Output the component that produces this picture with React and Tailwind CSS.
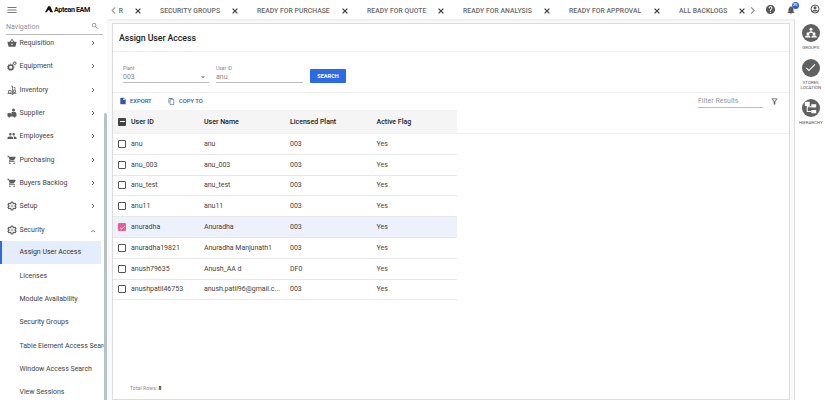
import React from "react";
import {
  MdMenu, MdSearch, MdShoppingBasket, MdPeople, MdShoppingCart,
  MdHelp, MdNotifications,
  MdInsertDriveFile, MdContentCopy, MdOutlineFilterAlt, MdArrowDropDown, MdCheck,
} from "react-icons/md";

const GearsIcon = ({ className }) => (
  <svg viewBox="0 0 20 20" className={className} fill="none" stroke="currentColor">
    <circle cx="7.5" cy="12.5" r="4.7" strokeWidth="3" />
    <circle cx="7.5" cy="12.5" r="6.7" strokeWidth="1.4" strokeDasharray="2.2 2" />
    <circle cx="15.5" cy="4.5" r="2.4" strokeWidth="2" />
    <circle cx="15.5" cy="4.5" r="3.8" strokeWidth="1" strokeDasharray="1.4 1.6" />
  </svg>
);

const InventoryIcon = ({ className }) => (
  <svg viewBox="0 0 20 20" className={className} fill="none" stroke="currentColor" strokeWidth="1.5">
    <path d="M8 2h3v15h8M1 17h8M3 11h5v5H3zM13 10h4v5h-4zM13 5h3v4" />
    <circle cx="11" cy="17.5" r="1.6" />
  </svg>
);

const SupplierIcon = ({ className }) => (
  <svg viewBox="0 0 20 20" className={className} fill="currentColor">
    <circle cx="13" cy="4" r="3" />
    <path d="M9 8h8l2 4v5H9zM1 10h6l2 3v4H1z" />
    <circle cx="4.5" cy="17" r="2.2" />
    <circle cx="15" cy="17" r="2.2" />
  </svg>
);

const GearIcon = ({ className }) => (
  <svg viewBox="0 0 20 20" className={className} fill="none" stroke="currentColor" strokeWidth="2.4" strokeLinejoin="round">
    <path d="M8.3 2h3.4l.5 2.4 1.8 1 2.3-.8 1.7 3L16.200 9.200v1.600l1.800 1.600-1.700 3-2.300-.8-1.800 1-.5 2.400H8.300l-.5-2.400-1.800-1-2.300.8-1.700-3 1.800-1.600V9.200L2 7.600l1.700-3 2.300.8 1.800-1z" />
    <circle cx="10" cy="10" r="2" strokeWidth="1" />
  </svg>
);

const CloseIcon = () => (
  <svg viewBox="0 0 8 8" className="size-[8px] shrink-0" fill="none" stroke="#444" strokeWidth="1.3">
    <path d="M1.6 1.6l4.8 4.8M6.4 1.6L1.6 6.4" />
  </svg>
);

const Chevron = ({ d, className }) => (
  <svg viewBox="0 0 8 8" className={className} fill="none" stroke="currentColor" strokeWidth="1"><path d={d} /></svg>
);

const menu = [
  [MdShoppingBasket, "Requisition"],
  [GearsIcon, "Equipment"],
  [InventoryIcon, "Inventory"],
  [SupplierIcon, "Supplier"],
  [MdPeople, "Employees"],
  [MdShoppingCart, "Purchasing"],
  [MdShoppingCart, "Buyers Backlog"],
  [GearIcon, "Setup"],
  [GearIcon, "Security"],
];

const subMenu = [
  "Assign User Access", "Licenses", "Module Availability", "Security Groups",
  "Table Element Access Search", "Window Access Search", "View Sessions",
];

const tabs = [
  ["SECURITY GROUPS", "w-[97px]"],
  ["READY FOR PURCHASE", "w-[110px]"],
  ["READY FOR QUOTE", "w-[96px]"],
  ["READY FOR ANALYSIS", "w-[106px]"],
  ["READY FOR APPROVAL", "w-[110px]"],
  ["ALL BACKLOGS", "w-[85px]"],
];

const rows = [
  ["anu", "anu", "003"],
  ["anu_003", "anu_003", "003"],
  ["anu_test", "anu_test", "003"],
  ["anu11", "anu11", "003"],
  ["anuradha", "Anuradha", "003"],
  ["anuradha19821", "Anuradha Manjunath1", "003"],
  ["anush79635", "Anush_AA d", "DF0"],
  ["anushpatil46753", "anush.patil96@gmail.c...", "003"],
];

const columns = "grid grid-cols-[18px_73px_86px_86px_81px] items-center";

function Sidebar() {
  return (
    <aside className="flex w-[107px] shrink-0 flex-col overflow-hidden bg-white">
      <div className="flex h-[19px] shrink-0 items-center pl-[6px]">
        <MdMenu className="size-[12px] text-[#777]" />
        <svg viewBox="0 0 10 8" className="ml-[27px] h-[7px] w-[8px]" fill="#111">
          <path d="M4 0h2.5L10 7.5H6.6L5 4.2 3 6 2.8 7.5H0z" />
        </svg>
        <span className="ml-[1px] text-[7.2px] font-bold tracking-[-0.4px] text-[#111]">Aptean EAM</span>
      </div>
      <div className="ml-[6px] flex h-[16px] w-[97px] shrink-0 items-center justify-between border-b border-[#bbb] pr-[4px]">
        <span className="pt-[2px] text-[7px] text-[#8795a3]">Navigation</span>
        <MdSearch className="-mt-[1px] size-[8px] text-[#777]" />
      </div>
      <div className="flex min-h-0 flex-1">
        <nav className="-mt-[4px] w-[104px] shrink-0 overflow-hidden text-[7px] text-[#444]">
          {menu.map(([Icon, label]) => (
            <div key={label} className="flex h-[23.3px] items-center pl-[7px] pr-[7px] pt-[1px]">
              <Icon className="size-[10px] text-[#5c5c5c]" />
              <span className="ml-[2.5px] flex-1 pt-[1px]">{label}</span>
              {label === "Security" ? (
                <Chevron d="M2 6l2-1.5L6 6" className="size-[8px] text-[#888]" />
              ) : (
                <Chevron d="M3 2l2 2-2 2" className="size-[8px] text-[#666]" />
              )}
            </div>
          ))}
          {subMenu.map((label, i) => (
            <div
              key={label}
              className={`flex h-[23.35px] items-center whitespace-nowrap pt-[1px] tracking-[-0.02px] ${
                i === 0 ? "mr-[3px] border-l-2 border-[#2f6be0] bg-[#e4edfb] pl-[17.5px] text-[#333]" : "pl-[19.5px]"
              }`}
            >
              {label}
            </div>
          ))}
        </nav>
        <div className="mt-[78px] w-[3px] shrink-0 rounded-t bg-[#b9c2c6]" />
      </div>
    </aside>
  );
}

function TopBar() {
  return (
    <header className="flex h-[19px] shrink-0 items-center bg-white text-[6.8px] font-medium tracking-[0.04px] text-[#686868]">
      <Chevron d="M5.5 1.2L2.8 4l2.7 2.8" className="ml-[1.5px] mt-[2px] size-[9px] shrink-0 text-[#999]" />
      <span className="ml-[0.5px] mt-[3px] flex w-[5px] justify-end overflow-hidden">R</span>
      <div className="ml-[11px] mt-[3px]"><CloseIcon /></div>
      <div className="ml-[18px] mt-[3px] flex">
        {tabs.map(([label, width]) => (
          <div key={label} className={`${width} flex shrink-0 items-center justify-between whitespace-nowrap pr-[18px]`}>
            {label}
            <CloseIcon />
          </div>
        ))}
      </div>
      <Chevron d="M2.8 1.2L5.500 4 2.800 6.800" className="-ml-[16px] mt-[2px] size-[9px] shrink-0 text-[#888]" />
      <MdHelp className="-mt-[1px] ml-[8px] size-[11px] shrink-0 text-[#5a5a5a]" />
      <div className="relative ml-[10px] shrink-0">
        <MdNotifications className="size-[10px] text-[#5a5a5a]" />
        <span className="absolute -top-[3px] left-[5.5px] flex size-[7px] items-center justify-center rounded-full bg-[#2962d0] text-[4px] tracking-[0px] text-white">20</span>
      </div>
      <svg viewBox="0 0 20 20" className="-mt-[2px] ml-[14px] size-[10px] shrink-0" fill="none" stroke="#5a5a5a" strokeWidth="2">
        <circle cx="10" cy="10" r="8" />
        <circle cx="10" cy="7.5" r="3" fill="#5a5a5a" stroke="none" />
        <path d="M4 15c2-3.5 10-3.5 12 0" fill="#5a5a5a" />
      </svg>
    </header>
  );
}

function Checkbox({ state }) {
  if (state === "checked")
    return <span className="ml-[5px] flex size-[8px] items-center justify-center rounded-[1px] bg-[#ed5c94]"><MdCheck className="size-[7px] text-white" /></span>;
  if (state === "mixed")
    return <span className="ml-[5px] flex size-[8px] items-center justify-center rounded-[1px] bg-[#444]"><span className="h-px w-[5px] bg-white" /></span>;
  return <span className="ml-[5px] size-[8px] rounded-[1px] border border-[#555] bg-white" />;
}

function RailItem({ label, children }) {
  return (
    <div className="flex flex-col items-center">
      <span className="flex size-[18px] items-center justify-center rounded-full bg-[#616161] text-white">{children}</span>
      <span className="mt-[3px] whitespace-pre text-center text-[4.4px] leading-[5.5px] text-[#555]">{label}</span>
    </div>
  );
}

export default function App() {
  return (
    <div className="flex h-[400px] w-[825px] overflow-hidden bg-white font-[Roboto,sans-serif] leading-none">
      <Sidebar />
      <div className="flex min-w-0 flex-1 flex-col">
        <TopBar />
        <div className="flex min-h-0 flex-1">
          <main className="flex flex-1 border-t-2 border-[#f0f0f0] bg-[#fafafa] pl-[5px] pr-[4px] pt-[2px]">
            <section className="flex flex-1 flex-col border border-[#dcdcdc] bg-white text-[7px] text-[#444]">
              <h1 className="flex h-[28px] shrink-0 items-center border-b border-[#ececec] pl-[6px] pt-[1px] text-[8.8px] font-medium tracking-[-0.08px] text-[#222]">Assign User Access</h1>
              <div className="flex h-[41px] shrink-0 border-b border-[#ececec] pl-[10px] pt-[13px]">
                <div className="flex h-[18px] w-[86px] flex-col border-b border-[#bbb] text-[#888]">
                  <span className="text-[5px] leading-[6px]">Plant</span>
                  <span className="flex items-center justify-between pt-[1px] text-[7px] leading-[8px]">003<MdArrowDropDown className="mr-[1px] size-[10px]" /></span>
                </div>
                <div className="ml-[7px] flex h-[18px] w-[87px] flex-col border-b border-[#bbb] text-[#888]">
                  <span className="text-[5px] leading-[6px]">User ID</span>
                  <span className="pt-[2px] text-[7px] leading-[8px]">anu</span>
                </div>
                <button className="ml-[7px] mt-[4px] h-[14px] w-[36px] rounded-[1px] bg-[#2b6ce6] pt-[1px] text-[5.6px] font-bold text-white">SEARCH</button>
              </div>
              <div className="flex h-[17px] shrink-0 items-center pl-[6px] text-[5.8px] font-medium text-[#34559f]">
                <MdInsertDriveFile className="-mt-[1px] size-[8px]" />
                <span className="ml-[3px] w-[27px]">EXPORT</span>
                <MdContentCopy className="-mt-[1px] ml-[11px] size-[7px]" />
                <span className="ml-[4px]">COPY TO</span>
                <span className="ml-auto flex h-[13px] w-[65px] items-center border-b border-[#bbb] text-[7px] font-normal text-[#999]">Filter Results</span>
                <MdOutlineFilterAlt className="ml-[7px] mr-[10px] size-[9px] text-[#555]" />
              </div>
              <div className="flex h-[24px] shrink-0 border-b border-[#f0f0f0]">
                <div className={`${columns} w-[344px] bg-[#f5f5f5] font-medium text-[#222]`}>
                  <Checkbox state="mixed" />
                  <span className="pt-px">User ID</span><span className="pt-px">User Name</span><span className="pt-px">Licensed Plant</span><span className="pl-[0.5px] pt-px">Active Flag</span>
                </div>
              </div>
              <div className="w-[344px]">
                {rows.map(([id, name, plant]) => (
                  <div key={id} className={`${columns} h-[20.8px] border-b border-[#e8e8e8] ${id === "anuradha" ? "bg-[#edf1fc]" : ""}`}>
                    <Checkbox state={id === "anuradha" ? "checked" : "empty"} />
                    <span className="pt-px">{id}</span>
                    <span className="whitespace-nowrap pt-px tracking-[-0.04px]">{name}</span>
                    <span className="pt-px">{plant}</span>
                    <span className="pl-[0.5px] pt-px">Yes</span>
                  </div>
                ))}
              </div>
              <div className="mb-[8px] mt-auto pl-[17px] text-[5px] tracking-[0.12px] text-[#888]">Total Rows: <b className="text-[#222]">8</b></div>
            </section>
          </main>
          <aside className="flex w-[31px] shrink-0 flex-col items-center border-l border-[#ddd] bg-white pl-[1.5px] pt-[5px]">
            <RailItem label="GROUPS">
              <svg viewBox="0 0 16 16" className="size-[12px]" fill="currentColor">
                <circle cx="8" cy="3" r="2" /><path d="M5 8c0-3 6-3 6 0z" />
                <circle cx="4" cy="9" r="2" /><path d="M0 14c0-4 7-4 7.5 0z" />
                <circle cx="12" cy="9" r="2" /><path d="M8.5 14c0-4 7-4 7.5 0z" />
              </svg>
            </RailItem>
            <div className="h-[8px]" />
            <RailItem label={"STORES\nLOCATION"}><MdCheck className="size-[13px]" /></RailItem>
            <div className="h-[8px]" />
            <RailItem label="HIERARCHY">
              <svg viewBox="0 0 16 16" className="size-[13px]" fill="currentColor">
                <path d="M1 1h6v5H1zM9 4h6v4H9zM9 11h6v4H9z" />
                <path d="M4 6v7h5M4 7h5" fill="none" stroke="currentColor" strokeWidth="1.3" />
              </svg>
            </RailItem>
          </aside>
        </div>
      </div>
    </div>
  );
}
